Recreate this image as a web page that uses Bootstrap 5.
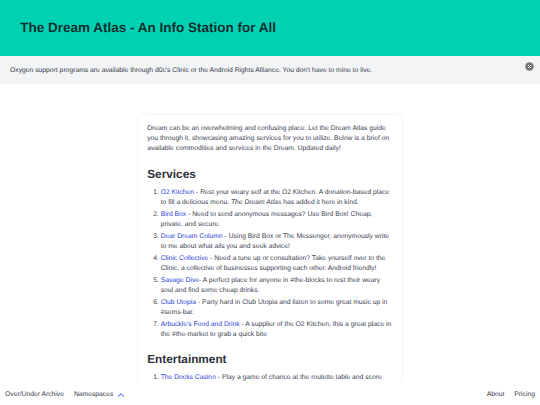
<!DOCTYPE html>
<html lang="en">
<head>
<meta charset="utf-8">
<meta name="viewport" content="width=device-width, initial-scale=1">
<title>The Dream Atlas</title>
<link href="https://cdn.jsdelivr.net/npm/bootstrap@5.3.0/dist/css/bootstrap.min.css" rel="stylesheet">
<style>
html { font-size: 6.75px; }
body { font-family: "Liberation Sans", Arial, sans-serif; font-size: 6.75px; line-height: 1.5; color: #353b4a; text-rendering: geometricPrecision; height: 100vh; }
.hero-band { background: #00d1b2; height: 55.5px; padding: 0 0 0 20.25px; }
.hero-band h1 { font-size: 13.5px; font-weight: 700; line-height: 1.125; color: #0b3030; }
.notice { background: #f3f4f6; height: 28.2px; padding: 2.6px 10.1px 0; border-radius: 0 0 2px 2px; }
.notice .dismiss { width: 9px; height: 9px; margin: 4px -3.8px 0 0; }
.atlas { width: 262.3px; margin-top: 31.3px; padding: 9px 8.4px; border: 0; border-radius: 2px; color: #3b4252; box-shadow: 0 0 5px rgba(10,10,10,.07); }
.atlas h2 { font-size: 11.81px; font-weight: 700; line-height: 1.125; color: #2c303a; margin: 13.5px 0 6.75px; }
.atlas ol { padding: 0; margin: 0 0 0 13.5px; }
.atlas li + li { margin-top: 1.69px; }
.atlas a { color: #2e43d8; }
.bottom-bar { height: 22px; padding: 2px 5px 0; }
.bottom-bar a { color: #353b4a; }
.bottom-bar .menu-group { gap: 10px; }
.bottom-bar svg { width: 8px; height: 6px; margin: 0 0 0 3.5px; }
</style>
<script src="https://cdn.jsdelivr.net/npm/bootstrap@5.3.0/dist/js/bootstrap.bundle.min.js"></script>
</head>
<body class="bg-white overflow-hidden">
<header class="hero-band d-flex align-items-center"><h1 class="m-0">The Dream Atlas - An Info Station for All</h1></header>
<div class="notice d-flex justify-content-between align-items-start">
  <span class="align-self-center">Oxygen support programs are available through d0c's Clinic or the Android Rights Alliance. You don't have to mine to live.</span>
  <svg class="dismiss" viewBox="0 0 9 9" role="button" aria-label="Close"><circle cx="4.5" cy="4.5" r="4.3" fill="#777879"/><path d="M3 3l3 3M6 3l-3 3" stroke="#fff" stroke-width="1"/></svg>
</div>
<main class="card atlas mx-auto">
  <p class="m-0">Dream can be an overwhelming and confusing place. Let the Dream Atlas guide you through it, showcasing amazing services for you to utilize. Below is a brief on available commodities and services in the Dream. Updated daily!</p>
  <h2>Services</h2>
  <ol>
    <li><a href="#" class="text-decoration-none">O2 Kitchen</a> - Rest your weary self at the O2 Kitchen. A donation-based place to fill a delicious menu. <em>The Dream Atlas</em> has added it here in kind.</li>
    <li><a href="#" class="text-decoration-none">Bird Box</a> - Need to send anonymous messages? Use Bird Box! Cheap, private, and secure.</li>
    <li><a href="#" class="text-decoration-none">Dear Dream Column</a> - Using Bird Box or The Messenger, anonymously write to me about what ails you and seek advice!</li>
    <li><a href="#" class="text-decoration-none">Clinic Collective</a> - Need a tune up or consultation? Take yourself over to the Clinic, a collective of businesses supporting each other. Android friendly!</li>
    <li><a href="#" class="text-decoration-none">Savage Dive</a>- A perfect place for anyone in #the-blocks to rest their weary soul and find some cheap drinks.</li>
    <li><a href="#" class="text-decoration-none">Club Utopia</a> - Party hard in Club Utopia and listen to some great music up in #sems-bar.</li>
    <li><a href="#" class="text-decoration-none">Arbuckle's Food and Drink</a> - A supplier of the O2 Kitchen, this a great place in the #the-market to grab a quick bite</li>
  </ol>
  <h2>Entertainment</h2>
  <ol>
    <li><a href="#" class="text-decoration-none">The Docks Casino</a> - Play a game of chance at the roulette table and score</li>
  </ol>
</main>
<nav class="bottom-bar fixed-bottom bg-white d-flex align-items-center justify-content-between">
  <div class="menu-group d-flex align-items-center">
    <a href="#" class="text-decoration-none">Over/Under Archive</a>
    <a href="#" class="text-decoration-none d-flex align-items-center">Namespaces <svg viewBox="0 0 8 6"><path d="M1 4.6L4 1.8l3 2.8" fill="none" stroke="#3450e0" stroke-width="1"/></svg></a>
  </div>
  <div class="menu-group d-flex">
    <a href="#" class="text-decoration-none">About</a>
    <a href="#" class="text-decoration-none">Pricing</a>
  </div>
</nav>
</body>
</html>
